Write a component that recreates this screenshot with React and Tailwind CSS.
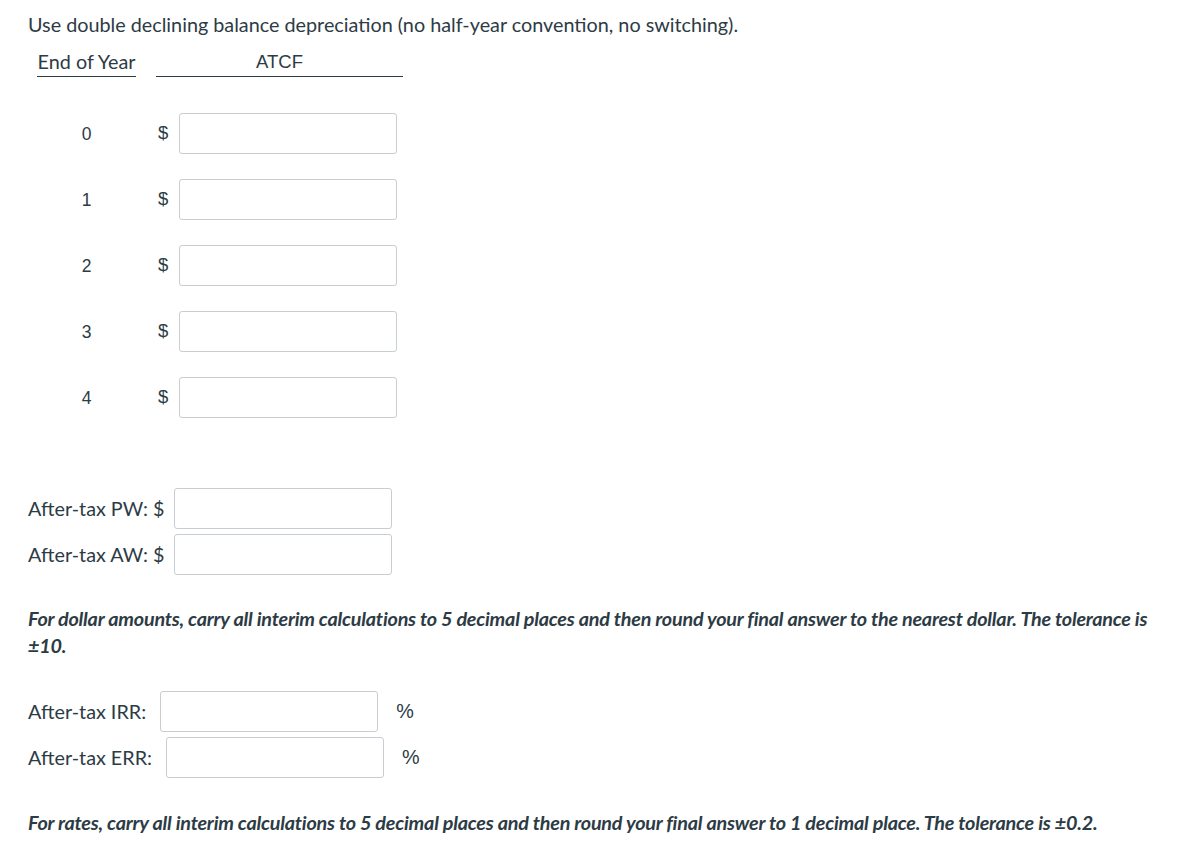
import React from "react";

const rows = [0, 1, 2, 3, 4];

function Box({ className = "" }) {
  return (
    <input
      type="text"
      className={`h-[41px] w-[218px] rounded-[3px] border border-[#c7cdd1] bg-white px-2 outline-none ${className}`}
    />
  );
}

const arial = { fontFamily: "'Liberation Sans', Arial, sans-serif" };

export default function App() {
  return (
    <div
      className="min-h-screen bg-white pl-[28px] pt-[11px] text-[19.8px] leading-[27px] text-[#2d3b45]"
      style={{ fontFamily: "Lato, 'Liberation Sans', sans-serif" }}
    >
      <p>Use double declining balance depreciation (no half-year convention, no switching).</p>

      <div className="ml-[9px] mt-[10px]">
        <div className="flex items-end gap-[20px]">
          <div className="w-[99px] whitespace-nowrap border-b border-[#2d3b45] pb-[1px] text-center">End of Year</div>
          <div className="w-[247px] border-b border-[#2d3b45] pb-[1px] text-center text-[18.5px]" style={arial}>
            ATCF
          </div>
        </div>

        <div className="mt-[36px] flex flex-col gap-[25px]" style={arial}>
          {rows.map((n) => (
            <div key={n} className="flex items-center gap-[20px]">
              <div className="w-[99px] pt-[2px] text-center text-[17.5px]">{n}</div>
              <div className="flex items-center">
                <span className="-mt-[2px] w-[23px] pl-[2px] text-[18.5px]">$</span>
                <Box />
              </div>
            </div>
          ))}
        </div>
      </div>

      <div className="mt-[70px] flex flex-col gap-[5px]">
        <div className="flex items-center gap-[9px]">
          <span>After-tax PW: $</span>
          <Box />
        </div>
        <div className="flex items-center gap-[9px]">
          <span>After-tax AW: $</span>
          <Box className="w-[217px]" />
        </div>
      </div>

      <p className="mt-[30px] pr-[10px] font-bold italic tracking-[-0.22px]">
        For dollar amounts, carry all interim calculations to 5 decimal places and then round your final answer to the nearest dollar. The tolerance is ±10.
      </p>

      <div className="mt-[32px] flex flex-col gap-[5px]">
        <div className="flex items-center">
          <span>After-tax IRR:</span>
          <Box className="ml-[14px]" />
          <span className="ml-[18px]" style={arial}>%</span>
        </div>
        <div className="flex items-center">
          <span>After-tax ERR:</span>
          <Box className="ml-[14px] w-[217px]" />
          <span className="ml-[18px]" style={arial}>%</span>
        </div>
      </div>

      <p className="mt-[31px] font-bold italic tracking-[-0.22px]">
        For rates, carry all interim calculations to 5 decimal places and then round your final answer to 1 decimal place. The tolerance is ±0.2.
      </p>
    </div>
  );
}
